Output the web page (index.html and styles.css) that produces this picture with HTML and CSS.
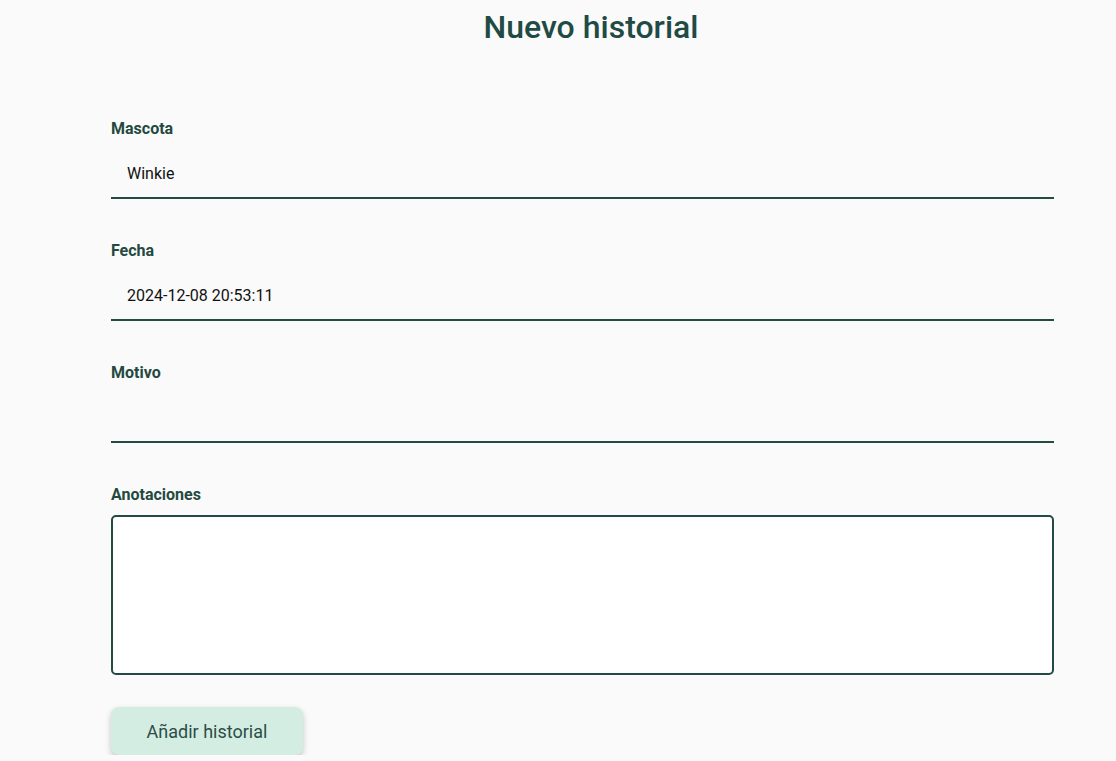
FILE: index.html
```html
<!DOCTYPE html>
<html lang="es">
<head>
<meta charset="utf-8">
<title>Nuevo historial</title>
<link rel="stylesheet" href="styles.css">
</head>
<body>
<div class="page">
  <h1 class="title">Nuevo historial</h1>
  <form class="form">
    <div class="field">
      <label class="label" for="mascota">Mascota</label>
      <input class="input" id="mascota" type="text" value="Winkie">
    </div>
    <div class="field">
      <label class="label" for="fecha">Fecha</label>
      <input class="input" id="fecha" type="text" value="2024-12-08 20:53:11">
    </div>
    <div class="field">
      <label class="label" for="motivo">Motivo</label>
      <input class="input" id="motivo" type="text" value="">
    </div>
    <div class="field field-area">
      <label class="label label-area" for="anotaciones">Anotaciones</label>
      <textarea class="textarea" id="anotaciones"></textarea>
    </div>
    <button class="button" type="button">Añadir historial</button>
  </form>
</div>
</body>
</html>
```
FILE: styles.css
```css
html, body {
  margin: 0;
  padding: 0;
  background: #fafafa;
  font-family: Roboto, "Noto Sans", sans-serif;
}
.page {
  padding: 8px 0 0 0;
}
.title {
  margin: 0;
  padding-left: 66px;
  text-align: center;
  font-size: 32px;
  line-height: 38px;
  font-weight: 500;
  color: #1f4b44;
}
.form {
  margin: 74px 62px 0 111px;
  display: flex;
  flex-direction: column;
}
.field {
  display: flex;
  flex-direction: column;
  margin-bottom: 43px;
}
.label {
  font-size: 16px;
  line-height: 18px;
  font-weight: 700;
  color: #24493f;
  margin-bottom: 11px;
}
.input {
  height: 50px;
  box-sizing: border-box;
  border: none;
  border-bottom: 2px solid #234a43;
  background: transparent;
  padding: 0 16px;
  font-family: Roboto, "Noto Sans", sans-serif;
  font-size: 16px;
  color: #111;
  outline: none;
}
.field-area {
  margin-bottom: 32px;
}
.label-area {
  margin-bottom: 11px;
}
.textarea {
  height: 160px;
  box-sizing: border-box;
  border: 2px solid #234a43;
  border-radius: 5px;
  background: #fff;
  resize: none;
  outline: none;
  font-family: Roboto, "Noto Sans", sans-serif;
  font-size: 16px;
  padding: 10px 16px;
}
.button {
  align-self: flex-start;
  width: 192px;
  height: 48px;
  border: none;
  border-radius: 8px;
  background: #d4ede2;
  color: #2b4d46;
  font-family: Roboto, "Noto Sans", sans-serif;
  font-size: 18px;
  box-shadow: 0 3px 6px rgba(0, 0, 0, 0.22);
  cursor: pointer;
}
```
